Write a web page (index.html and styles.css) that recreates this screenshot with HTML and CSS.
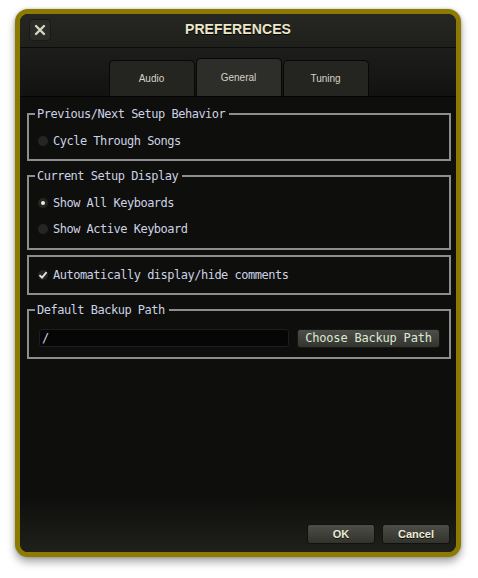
FILE: index.html
```html
<!DOCTYPE html>
<html>
<head>
<meta charset="utf-8">
<link rel="stylesheet" href="styles.css">
</head>
<body>
<div class="window">
  <div class="titlebar">
    <button class="close" aria-label="Close">
      <svg width="12" height="12" viewBox="0 0 12 12"><path d="M2 2 L10 10 M10 2 L2 10" stroke="#d6d6c4" stroke-width="2.4" stroke-linecap="round"/></svg>
    </button>
    <div class="title">PREFERENCES</div>
  </div>
  <div class="tabbar">
    <div class="tab">Audio</div>
    <div class="tab active">General</div>
    <div class="tab">Tuning</div>
  </div>
  <div class="content">
    <fieldset class="group g1">
      <legend>Previous/Next Setup Behavior</legend>
      <div class="row"><span class="ind"></span><span>Cycle Through Songs</span></div>
    </fieldset>
    <fieldset class="group g2">
      <legend>Current Setup Display</legend>
      <div class="row"><span class="ind on"></span><span>Show All Keyboards</span></div>
      <div class="row"><span class="ind"></span><span>Show Active Keyboard</span></div>
    </fieldset>
    <fieldset class="group g3">
      <div class="row"><span class="ind check"><svg width="10" height="10" viewBox="0 0 10 10"><path d="M1.5 5.2 L4 7.6 L8.6 2.2" fill="none" stroke="#e8e8e0" stroke-width="1.8"/></svg></span><span>Automatically display/hide comments</span></div>
    </fieldset>
    <fieldset class="group g4">
      <legend>Default Backup Path</legend>
      <div class="row pathrow">
        <div class="path">/</div>
        <button class="choose">Choose Backup Path</button>
      </div>
    </fieldset>
    <div class="spacer"></div>
    <div class="footer">
      <button class="btn">OK</button>
      <button class="btn">Cancel</button>
    </div>
  </div>
</div>
</body>
</html>
```

FILE: styles.css
```css
html, body {
  margin: 0;
  padding: 0;
  background: #ffffff;
}
body {
  width: 478px;
  height: 578px;
  overflow: hidden;
}
.window {
  margin: 9px 0 0 15px;
  width: 436px;
  height: 538px;
  border: 5px solid #8c7b00;
  border-radius: 13px;
  background: #0e0e0c;
  box-shadow: 0 5px 9px rgba(0,0,0,0.35), 0 0 3px rgba(0,0,0,0.25);
  display: flex;
  flex-direction: column;
  overflow: hidden;
  font-family: "Liberation Sans", Arial, sans-serif;
}
.titlebar {
  height: 33px;
  flex: none;
  background: linear-gradient(#262622, #1f1f1c);
  border-bottom: 1px solid #0b0b0a;
  display: flex;
  align-items: center;
  border-radius: 8px 8px 0 0;
}
.close {
  margin-left: 9px;
  margin-bottom: 1px;
  width: 22px;
  height: 22px;
  border: none;
  border-radius: 4px;
  background: #2c2c28;
  box-shadow: inset 0 0 0 1px #1a1a18;
  padding: 0;
  display: flex;
  align-items: center;
  justify-content: center;
}
.title {
  flex: 1;
  text-align: center;
  margin-right: 31px;
  padding-bottom: 3px;
  font-weight: bold;
  font-size: 14px;
  color: #ebe7c8;
  text-shadow: 0 1px 0 #000;
  letter-spacing: 0.1px;
}
.tabbar {
  height: 48px;
  flex: none;
  background: linear-gradient(#1d1d1b, #121211);
  display: flex;
  justify-content: center;
  align-items: flex-end;
  gap: 1px;
  padding-left: 1px;
}
.tab {
  width: 86px;
  height: 36px;
  box-sizing: border-box;
  background: #242421;
  border: 1px solid #080808;
  border-bottom: none;
  border-radius: 5px 5px 0 0;
  color: #d4d2c8;
  font-size: 10px;
  display: flex;
  align-items: center;
  justify-content: center;
  padding-bottom: 1px;
}
.tab.active {
  height: 38px;
  background: #2d2d29;
}
.content {
  flex: 1;
  display: flex;
  flex-direction: column;
  padding: 0 5px 0 7px;
  border-top: 1px solid #040404;
  background: linear-gradient(#0e0e0c 0, #0e0e0c 400px, #1f1f1b 100%);
  font-family: "DejaVu Sans Mono", monospace;
  font-size: 12px;
  letter-spacing: -0.5px;
  color: #ccd2e4;
}
.group {
  margin: 0;
  border: 2px solid #8e8e8e;
  padding: 7px 8px 5px 9px;
  min-width: 0;
}
.group legend {
  padding: 0 4px 0 2px;
  margin-left: -3px;
  height: 14px;
  line-height: 14px;
}
.g1 { margin-top: 10px; }
.g2 { margin-top: 8px; padding-bottom: 6px; }
.g3 { margin-top: 5px; padding-top: 5px; }
.g4 { margin-top: 8px; padding-top: 8px; padding-bottom: 6px; }
.row {
  height: 26px;
  display: flex;
  align-items: center;
  gap: 5px;
}
.ind {
  width: 10px;
  height: 10px;
  border-radius: 50%;
  background: #252523;
  box-shadow: 0 1px 0 #111;
  display: flex;
  align-items: center;
  justify-content: center;
  flex: none;
}
.ind.on::after {
  content: "";
  width: 4px;
  height: 4px;
  border-radius: 50%;
  background: #ececd8;
}
.pathrow {
  gap: 8px;
  padding-left: 1px;
}
.path {
  width: 246px;
  height: 16px;
  background: #060606;
  border: 1px solid #1e1e1c;
  border-radius: 3px;
  padding-left: 2px;
  line-height: 16px;
}
.choose {
  width: 143px;
  height: 19px;
  border: 1px solid #161614;
  border-radius: 3px;
  background: linear-gradient(#4e4e48, #34342f);
  color: #dbe9d6;
  font-family: "DejaVu Sans Mono", monospace;
  font-size: 12px;
  letter-spacing: -0.2px;
  padding: 0;
}
.spacer { flex: 1; }
.footer {
  display: flex;
  justify-content: flex-end;
  gap: 7px;
  padding: 0 1px 8px 0;
}
.btn {
  width: 68px;
  height: 20px;
  border: 1px solid #111110;
  border-radius: 3px;
  background: linear-gradient(#4e4e48, #33332e);
  color: #ecebd4;
  font-family: "Liberation Sans", Arial, sans-serif;
  font-weight: bold;
  font-size: 11px;
  padding: 0;
  text-shadow: 0 1px 0 #111;
}
```
